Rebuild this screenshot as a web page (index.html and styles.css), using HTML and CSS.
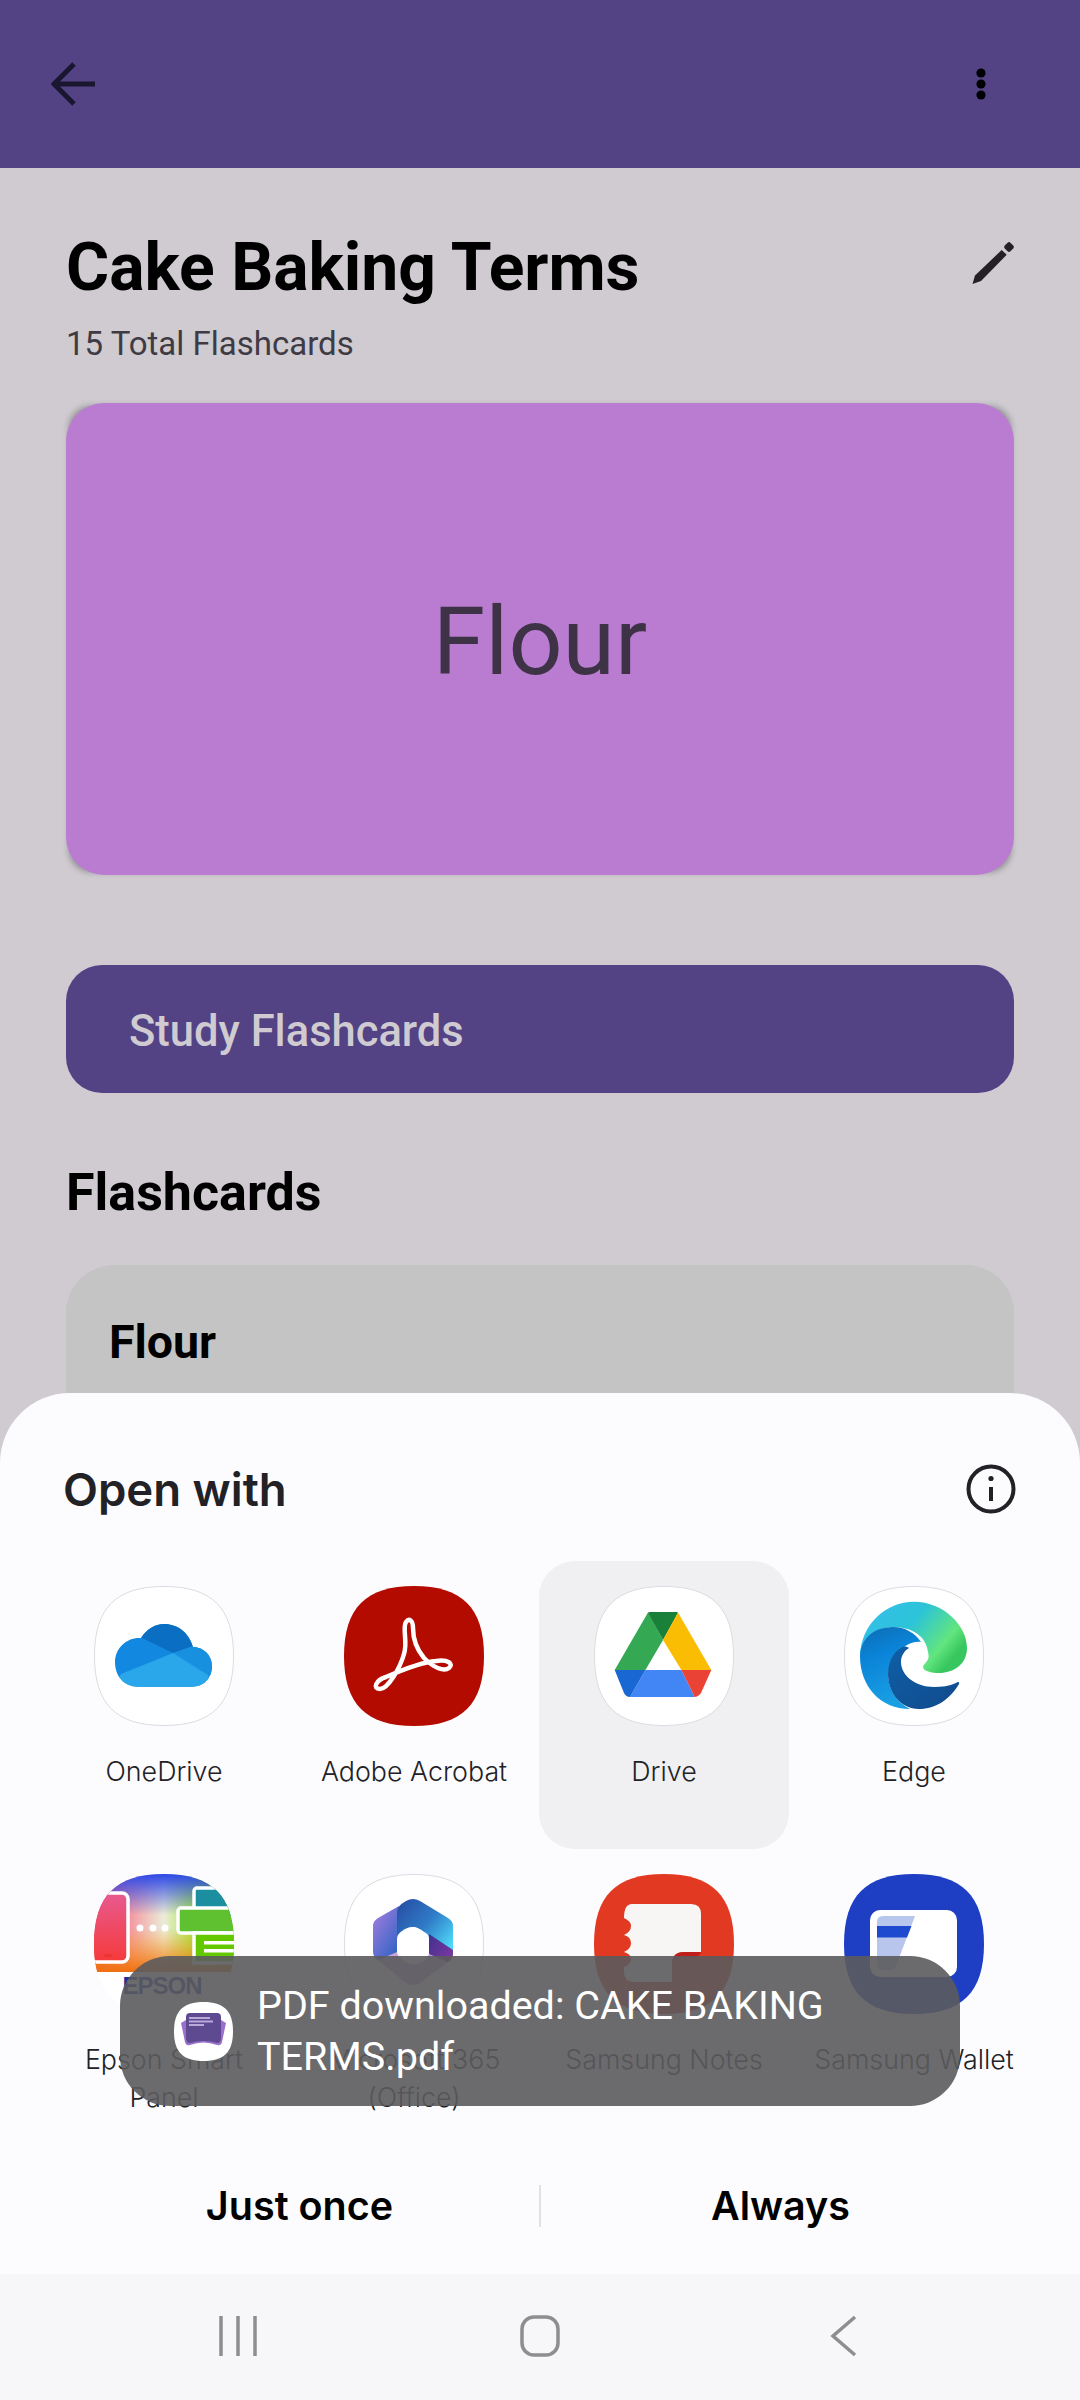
FILE: index.html
```html
<!DOCTYPE html>
<html lang="en">
<head>
<meta charset="utf-8">
<title>Cake Baking Terms</title>
<link rel="stylesheet" href="styles.css">
</head>
<body>
<div class="screen">
  <header class="appbar">
    <svg class="back-icon" viewBox="0 0 46 44"><path d="M44 22H4M23 2 3 22l20 20"/></svg>
    <svg class="more-icon" viewBox="0 0 10 32"><circle cx="5" cy="5" r="4.6"/><circle cx="5" cy="16" r="4.6"/><circle cx="5" cy="27" r="4.6"/></svg>
  </header>
  <main class="content">
    <div class="title-row">
      <h1 class="title">Cake Baking Terms</h1>
      <svg class="edit-icon" viewBox="0 0 48 48"><path d="M4.500 43 7 34.500 33.700 9 38.700 13.700 13 40Z"/><rect x="37" y="2" width="8" height="8" rx="2" transform="rotate(45 41 6)"/></svg>
    </div>
    <p class="count">15 Total Flashcards</p>
    <section class="flashcard">Flour</section>
    <div class="study-btn">Study Flashcards</div>
    <h2 class="section-title">Flashcards</h2>
    <div class="list-card">Flour</div>
  </main>

  <section class="sheet">
    <div class="sheet-head">
      <span class="sheet-title">Open with</span>
      <svg class="info-icon" viewBox="0 0 50 50"><circle cx="25" cy="25" r="22.5"/><path d="M25 23v14"/><circle class="dot" cx="25" cy="14.5" r="2.6"/></svg>
    </div>
    <div class="apps">
      <div class="app">
        <svg class="app-icon" viewBox="0 0 140 140">
          <defs><clipPath id="cloud"><path d="M47 52C53 43 61 38 70 38 84 38 95 47 99 61 110 61 118 70 118 80 118 92 110 100.7 98 100.7H44C30 100.7 21 90 21 76 21 62 33 51 47 52Z"/></clipPath></defs>
          <path class="sq-outline" d="M70 .5C118 .5 139.500 22 139.500 70S118 139.500 70 139.500.5 118 .5 70 22 .5 70 .5Z"/>
          <g clip-path="url(#cloud)">
            <rect x="15" y="30" width="110" height="80" fill="#1288E0"/>
            <path d="M46 51 79 67 99 61 99 30H40Z" fill="#0A6FC2"/>
            <path d="M79 67 114 89 125 90V50L99 60Z" fill="#1890E0"/>
            <path d="M27 88 79 67 114 89 125 110H15Z" fill="#2AA6EA"/>
          </g>
        </svg>
        <span class="app-label">OneDrive</span>
      </div>
      <div class="app">
        <svg class="app-icon" viewBox="0 0 140 140">
          <path fill="#B30B00" d="M70 0C118 0 140 22 140 70S118 140 70 140 0 118 0 70 22 0 70 0Z"/>
          <path fill="none" stroke="#fff" stroke-width="4.500" d="M36 103C28 103 32 94 42 91 58 84 78 76 92 75 104 73 110 78 105 82 100 86 90 82 80 72 70 60 69 50 69 42 69 34 65 32 62 36 58 42 64 56 60 68 56 82 44 103 36 103Z"/>
        </svg>
        <span class="app-label">Adobe Acrobat</span>
      </div>
      <div class="app app-selected">
        <svg class="app-icon" viewBox="0 0 140 140">
          <path class="sq-outline" d="M70 .5C118 .5 139.500 22 139.500 70S118 139.500 70 139.500.5 118 .5 70 22 .5 70 .5Z"/>
          <path fill="#34A853" d="M54 26.500 69 54 51.400 84H20.700Z"/>
          <path fill="#188038" d="M56 26H82Q84 26 84 27L69 54 54 27Q54 26 56 26Z"/>
          <path fill="#FBBC04" d="M84 26.500 117.300 84H87.400L69 54Z"/>
          <path fill="#4285F4" d="M51.400 84H87.400L100.700 111H36Z"/>
          <path fill="#1967D2" d="M20.700 84H51.400L36 111Q32 111 30 107Z"/>
          <path fill="#EA4335" d="M87.400 84H117.300L107 107Q104 111 100.700 111Z"/>
        </svg>
        <span class="app-label">Drive</span>
      </div>
      <div class="app">
        <svg class="app-icon" viewBox="0 0 140 140">
          <defs>
            <linearGradient id="edgeTop" x1="0" y1="0" x2="1" y2=".55"><stop offset="0" stop-color="#37BDF0"/><stop offset=".5" stop-color="#2CC4D8"/><stop offset=".85" stop-color="#62E57E"/><stop offset="1" stop-color="#38C75E"/></linearGradient>
            <linearGradient id="edgeBody" x1="0" y1="0" x2=".3" y2="1"><stop offset="0" stop-color="#0D6CB4"/><stop offset=".4" stop-color="#0A84D8"/><stop offset="1" stop-color="#19A0E4"/></linearGradient>
            <linearGradient id="edgeWave" x1="0" y1="0" x2="1" y2="1"><stop offset="0" stop-color="#0E5FA8"/><stop offset="1" stop-color="#114A8B"/></linearGradient>
          </defs>
          <path class="sq-outline" d="M70 .5C118 .5 139.500 22 139.500 70S118 139.500 70 139.500.5 118 .5 70 22 .5 70 .5Z"/>
          <path fill="url(#edgeTop)" d="M16 70C17 38 42 15.700 70 15.700 100 15.700 123 40 123 62 123 78 110 87 95 87 88 87 79 85 79 81 79 79 81 78 83 75 85 72 85 70 84 66 82 50 68 41 49 41 32 41 20 52 16 70Z"/>
          <path fill="url(#edgeBody)" d="M16 70C17 52 30 41 49 41 61 41 71 47 77 56 65 54 50 65 44 87 44 103 52 116 66 123 36 123 16 100 16 70Z"/>
          <path fill="url(#edgeWave)" d="M57 62C50 65 44 76 44 88 44 106 56 123 75 123 92 123 106 113 115 98 116 96 114 95 112 97 105 100 98 101 90 101 72 101 57 90 57 76 57 70 60 65 65 62 62 60 60 60 57 62Z"/>
        </svg>
        <span class="app-label">Edge</span>
      </div>
      <div class="app">
        <svg class="app-icon" viewBox="0 0 140 140">
          <defs>
            <clipPath id="sqEpson"><path d="M70 0C118 0 140 22 140 70S118 140 70 140 0 118 0 70 22 0 70 0Z"/></clipPath>
            <linearGradient id="epH"><stop offset="0" stop-color="#EE3D6E"/><stop offset=".28" stop-color="#F3A0A8"/><stop offset=".5" stop-color="#ECECD8"/><stop offset=".74" stop-color="#9CE42C"/><stop offset="1" stop-color="#4AD400"/></linearGradient>
            <linearGradient id="epTop" x1="0" y1="0" x2="0" y2="1"><stop offset="0" stop-color="#2C48E8"/><stop offset=".42" stop-color="#2C48E8" stop-opacity="0"/></linearGradient>
            <linearGradient id="epBot" x1="0" y1="0" x2="0" y2="1"><stop offset=".55" stop-color="#F8A010" stop-opacity="0"/><stop offset="1" stop-color="#F07010"/></linearGradient>
            <linearGradient id="epPhone" x1="0" y1="0" x2="0" y2="1"><stop offset="0" stop-color="#E85A90"/><stop offset="1" stop-color="#F53A3A"/></linearGradient>
          </defs>
          <g clip-path="url(#sqEpson)">
            <rect width="140" height="140" fill="#fff"/>
            <rect width="140" height="98" fill="url(#epH)"/>
            <rect width="140" height="98" fill="url(#epTop)"/>
            <rect width="140" height="98" fill="url(#epBot)"/>
            <rect x="-6" y="19" width="40" height="69" rx="6" fill="url(#epPhone)" stroke="#fff" stroke-width="3.500"/>
            <rect x="10" y="80" width="8" height="3" rx="1.500" fill="#E33"/>
            <circle cx="46" cy="54" r="3.500" fill="#fff"/><circle cx="59" cy="54" r="3.500" fill="#fff"/><circle cx="71" cy="54" r="3.500" fill="#fff"/>
            <rect x="100" y="14" width="50" height="30" rx="3" fill="#1B8FA0" stroke="#fff" stroke-width="3.500"/>
            <rect x="84" y="34" width="66" height="25" rx="3" fill="#5FC030" stroke="#fff" stroke-width="3.500"/>
            <rect x="100" y="59" width="50" height="30" fill="#64C800" stroke="#fff" stroke-width="3.500"/>
            <rect x="110" y="67" width="30" height="3.500" fill="#fff"/><rect x="110" y="75" width="30" height="3.500" fill="#fff"/>
            <text class="epson-mark" x="68" y="120" text-anchor="middle">EPSON</text>
          </g>
        </svg>
        <span class="app-label">Epson Smart Panel</span>
      </div>
      <div class="app">
        <svg class="app-icon" viewBox="0 0 140 140">
          <defs>
            <linearGradient id="m1" x1="0" y1="0" x2=".7" y2="1"><stop offset="0" stop-color="#A97FE0"/><stop offset="1" stop-color="#2A62C4"/></linearGradient>
            <linearGradient id="m2" x1="0" y1="0" x2="1" y2=".8"><stop offset="0" stop-color="#274AA0"/><stop offset=".55" stop-color="#2F7CC8"/><stop offset="1" stop-color="#4ED8F8"/></linearGradient>
            <linearGradient id="m3" x1="0" y1="0" x2="1" y2="1"><stop offset="0" stop-color="#40308C"/><stop offset="1" stop-color="#8A3AA8"/></linearGradient>
          </defs>
          <path class="sq-outline" d="M70 .5C118 .5 139.500 22 139.500 70S118 139.500 70 139.500.5 118 .5 70 22 .5 70 .5Z"/>
          <path fill="url(#m1)" d="M34 44 55 32V62L53 82V95L34 86Q29 83 29 78V52Q29 47 34 44Z"/>
          <path fill="url(#m2)" d="M62 27Q69 23 76 27L104 44Q109 47 109 52V80L85 64Q77 53 69 53 60 53 53 62V38Q53 32 62 27Z"/>
          <path fill="url(#m3)" d="M85 60 109 76V80Q109 85 104 88L86 99 85 78Z"/>
          <path fill="#C9A3D8" d="M34 86 53 78Q56 88 69 90 80 90 85 80L104 88 76 109Q69 113 62 109Z"/>
          <path fill="#fff" d="M65 54Q69 52 73 54L82 59Q85 61 85 65V77Q85 81 82 83L73 88Q69 90 65 88L56 83Q53 81 53 77V65Q53 61 56 59Z"/>
        </svg>
        <span class="app-label">Microsoft 365 (Office)</span>
      </div>
      <div class="app">
        <svg class="app-icon" viewBox="0 0 140 140">
          <path fill="#E23A22" d="M70 0C118 0 140 22 140 70S118 140 70 140 0 118 0 70 22 0 70 0Z"/>
          <path fill="#F8F6F4" d="M38 30H97Q107 30 107 40V78H90Q78 78 78 90V108H40Q30 108 30 98V93Q37 90 37 85 37 80 30 78 37 75 37 69 37 63 30 61 37 58 37 52 37 47 30 44 30 30 38 30Z"/>
          <path fill="#BF1F18" d="M107 78Q106 82 100 84L84 84Q80 86 78 90 78 78 90 78Z"/>
        </svg>
        <span class="app-label">Samsung Notes</span>
      </div>
      <div class="app">
        <svg class="app-icon" viewBox="0 0 140 140">
          <path fill="#1E3FC4" d="M70 0C118 0 140 22 140 70S118 140 70 140 0 118 0 70 22 0 70 0Z"/>
          <rect x="26" y="36" width="87" height="67" rx="10" fill="#fff"/>
          <path fill="#B8C6EE" d="M39 42H71L52 92Q50 96 46 96H39Q33 96 33 90V48Q33 42 39 42Z"/>
          <path fill="#1E4AD0" d="M33 52H67.500L63 63.500H33Z"/>
        </svg>
        <span class="app-label">Samsung Wallet</span>
      </div>
    </div>
    <div class="sheet-actions">
      <span class="action">Just once</span>
      <span class="action-divider"></span>
      <span class="action">Always</span>
    </div>
    <nav class="navbar">
      <svg class="nav-icon nav-recent" viewBox="0 0 40 42"><path d="M3 1V41M20 1V41M37 1V41"/></svg>
      <svg class="nav-icon nav-home" viewBox="0 0 40 42"><rect x="2" y="2" width="36" height="38" rx="12"/></svg>
      <svg class="nav-icon nav-back" viewBox="0 0 40 42"><path d="M33 2 11 21 33 40"/></svg>
    </nav>
  </section>

  <div class="toast">
    <svg class="toast-icon" viewBox="0 0 59 59">
      <path fill="#fff" d="M29.500 0C50 0 59 9 59 29.500S50 59 29.500 59 0 50 0 29.500 9 0 29.500 0Z"/>
      <path fill="#9A70CC" d="M7 21 12 18H47L52 21 48 40Q47 44 43 43 29.500 38 16 43 12 44 11 40Z"/>
      <path fill="#5E4A90" d="M16 11H43Q47 11 47 15V36Q47 41 43 41 29.500 37 16 41 12 41 12 36V15Q12 11 16 11Z"/>
      <path fill="#B9A8DA" d="M15 15H36V17H15ZM15 18.500H39V20.500H15ZM15 22H30V24H15Z"/>
    </svg>
    <span class="toast-text">PDF downloaded: CAKE BAKING TERMS.pdf</span>
  </div>
</div>
</body>
</html>
```
FILE: styles.css
```css
* { box-sizing: border-box; }
html, body { margin: 0; padding: 0; }
.screen {
  position: relative;
  width: 1080px;
  height: 2400px;
  overflow: hidden;
  background: #cfcbd1;
  font-family: Roboto, "Liberation Sans", sans-serif;
}
.appbar {
  height: 168px;
  background: #534385;
  display: flex;
  align-items: center;
  justify-content: space-between;
  padding: 0 94px 0 51px;
}
.back-icon { width: 46px; height: 44px; fill: none; stroke: #1a1630; stroke-width: 5; }
.more-icon { width: 10px; height: 32px; fill: #000; }
.content { padding: 0 66px; }
.title-row {
  display: flex;
  justify-content: space-between;
  align-items: center;
  height: 80px;
  margin-top: 60px;
}
.title { margin: 0; font-size: 66px; line-height: 80px; font-weight: 700; color: #000; }
.edit-icon { width: 48px; height: 48px; fill: #232126; margin-right: -2px; margin-top: -6px; }
.count { margin: 16px 0 0; font-size: 33px; line-height: 40px; color: #3f3b44; }
.flashcard {
  position: relative;
  z-index: 0;
  margin-top: 39px;
  height: 472px;
  padding-top: 4px;
  display: flex;
  align-items: center;
  justify-content: center;
  font-size: 95px;
  color: #3e3346;
}
.flashcard::before {
  content: "";
  position: absolute;
  inset: 3px;
  z-index: -2;
  border-radius: 22px;
  background: rgba(0, 0, 0, .3);
  filter: blur(3px);
}
.flashcard::after {
  content: "";
  position: absolute;
  inset: 0;
  z-index: -1;
  border-radius: 38px;
  background: #ba7cd1;
}
.study-btn {
  margin-top: 90px;
  height: 128px;
  border-radius: 36px;
  background: #534385;
  display: flex;
  align-items: center;
  padding: 4px 0 0 63px;
  font-size: 43.5px;
  font-weight: 500;
  color: #cfcbd1;
}
.section-title { margin: 68px 0 0; font-size: 52px; line-height: 64px; font-weight: 700; color: #000; }
.list-card {
  margin-top: 40px;
  height: 300px;
  border-radius: 48px;
  background: #c4c4c4;
  padding: 50px 43px;
  font-size: 46.500px;
  line-height: 54px;
  font-weight: 700;
  color: #000;
}
.sheet {
  position: absolute;
  left: 0;
  right: 0;
  top: 1393px;
  bottom: 0;
  border-radius: 70px 70px 0 0;
  background: #fcfcff;
  display: flex;
  flex-direction: column;
  font-family: Inter, "Noto Sans", sans-serif;
}
.sheet-head {
  height: 168px;
  padding: 59px 64px 0 63px;
  display: flex;
  justify-content: space-between;
  align-items: flex-start;
}
.sheet-title { font-size: 45.500px; line-height: 76px; font-weight: 600; color: #222226; }
.info-icon { width: 50px; height: 50px; margin-top: 12px; fill: none; stroke: #222226; stroke-width: 4; }
.info-icon .dot { fill: #222226; stroke: none; }
.apps {
  display: grid;
  grid-template-columns: repeat(4, 250px);
  grid-auto-rows: 288px;
  padding-left: 39px;
}
.app {
  display: flex;
  flex-direction: column;
  align-items: center;
  padding-top: 25px;
  border-radius: 36px;
}
.app-selected { background: #f0f0f2; }
.app-icon { width: 140px; height: 140px; flex: none; }
.sq-outline { fill: #fff; stroke: #dcdce0; stroke-width: 1; }
.epson-mark { font-family: "Liberation Sans", sans-serif; font-size: 24px; font-weight: 700; fill: #1B2F9C; letter-spacing: -1px; }
.app-label {
  margin-top: 26px;
  width: 230px;
  text-align: center;
  font-size: 26.800px;
  line-height: 38px;
  font-weight: 350;
  color: #222226;
}
.sheet-actions {
  flex: 1;
  display: flex;
  align-items: center;
  justify-content: center;
}
.action { width: 479px; text-align: center; font-size: 39.500px; font-weight: 600; color: #000; }
.action-divider { width: 2px; height: 42px; background: #e2e2e4; }
.navbar {
  height: 126px;
  padding-bottom: 3px;
  background: #f7f7f9;
  display: grid;
  grid-template-columns: repeat(3, 302px);
  justify-content: center;
  justify-items: center;
  align-items: center;
}
.nav-icon { width: 40px; height: 42px; fill: none; stroke: #8e8e90; stroke-width: 3.5; }
.toast {
  position: absolute;
  left: 120px;
  top: 1956px;
  width: 840px;
  height: 150px;
  border-radius: 50px;
  background: rgba(91, 91, 93, .9);
  display: flex;
  align-items: center;
  padding: 0 60px 0 54px;
  gap: 24px;
}
.toast-icon { width: 59px; height: 59px; flex: none; }
.toast-text { font-size: 39.500px; line-height: 51px; color: #fff; }
```
